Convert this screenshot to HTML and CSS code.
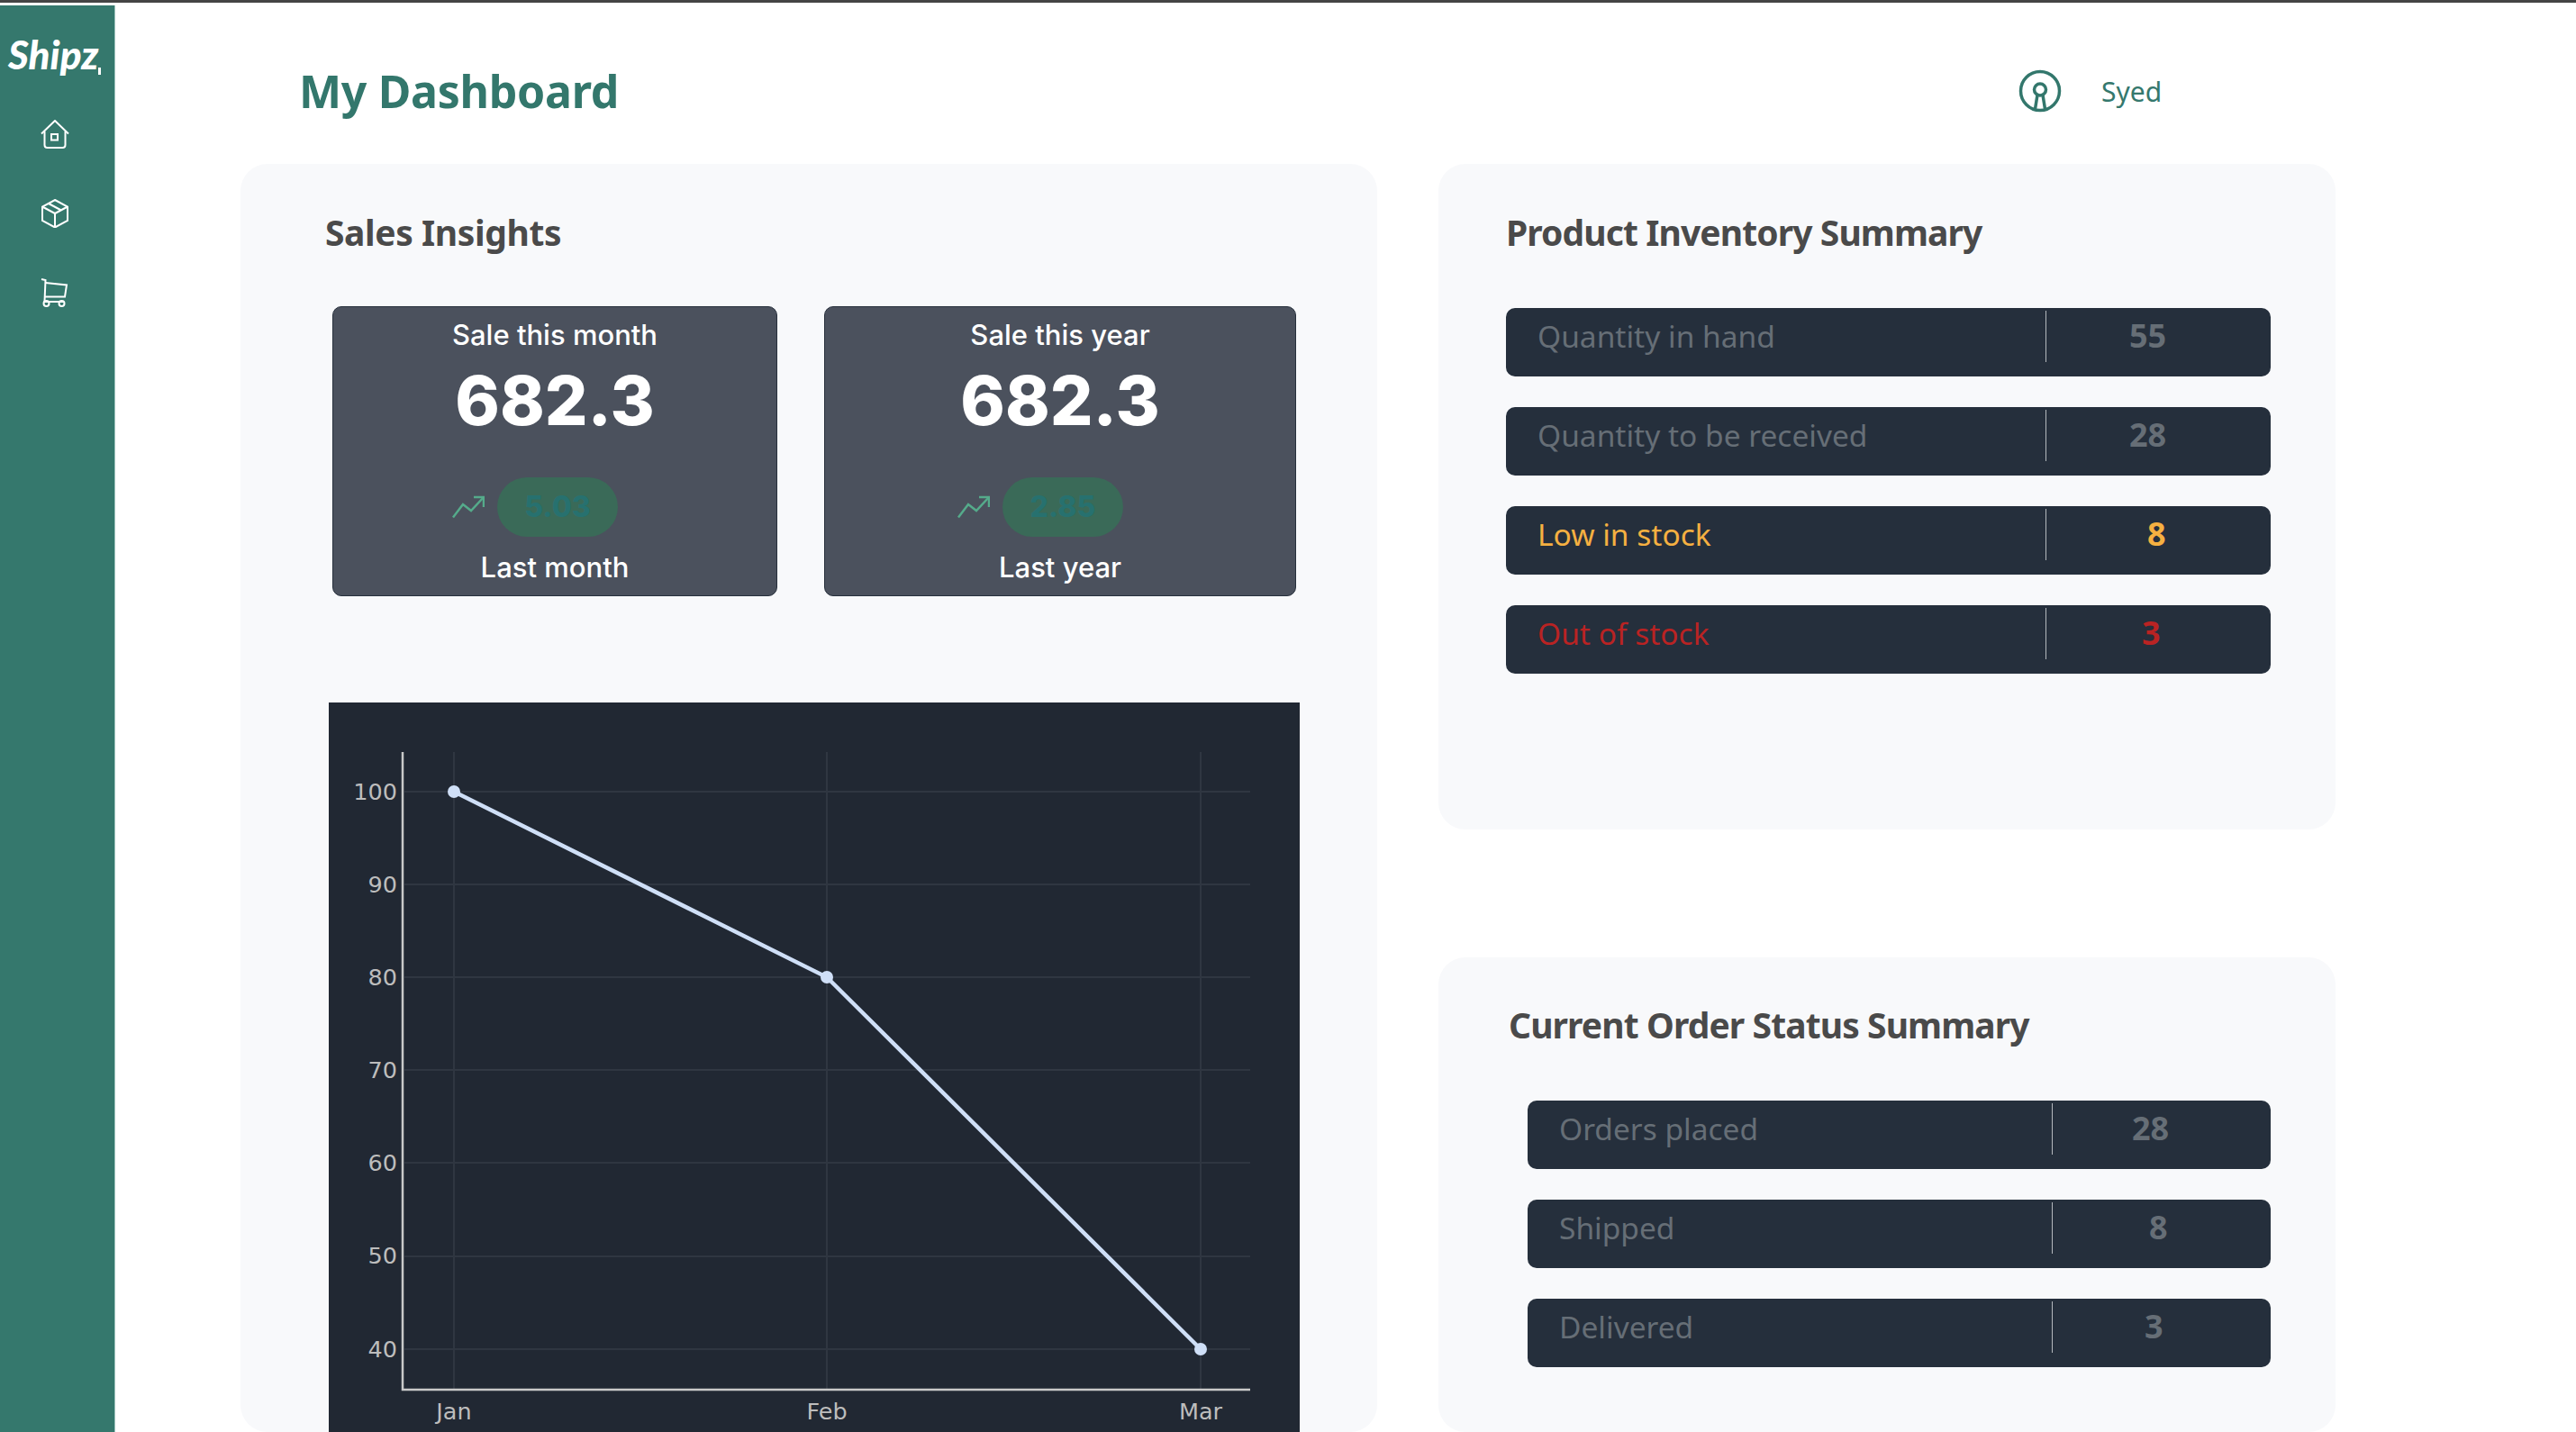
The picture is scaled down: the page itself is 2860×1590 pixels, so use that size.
FILE: index.html
```html
<!DOCTYPE html>
<html lang="en">

<head>
    <meta charset="UTF-8">
    <title>Shipzy Dashboard</title>
    <link rel="stylesheet" href="styles.css">
</head>

<body>
    <div class="topbar"></div>
    <div class="app">
        <aside class="sidebar">
            <div class="logo">Shipz</div>
            <nav class="nav">
                <svg class="nav-icon" viewBox="0 0 32 32">
                    <path d="M1 15.500L16 1L31 15.500" />
                    <path d="M4.500 13V28C4.500 30 5.500 31 7.500 31H24.500C26.500 31 27.500 30 27.500 28V13" />
                    <rect x="12" y="16" width="7" height="6.500" />
                </svg>
                <svg class="nav-icon" viewBox="0 0 32 32">
                    <path d="M16 1L30 8.500V24L16 31.500L2 24V8.500Z" />
                    <path d="M2 8.500L16 16L30 8.500M16 16V31.500M9 5L23 12.500" />
                </svg>
                <svg class="nav-icon" viewBox="0 0 32 32">
                    <path d="M1 1L5.500 2L4.500 26H25" />
                    <path d="M5.500 5L29 7.500L27 20.500H5" />
                    <circle cx="6.500" cy="28" r="3" />
                    <circle cx="23.500" cy="28" r="3" />
                </svg>
            </nav>
        </aside>

        <main class="main">
            <header class="header">
                <h1 class="page-title">My Dashboard</h1>
                <div class="user">
                    <svg class="user-icon" viewBox="0 0 48 48">
                        <circle cx="24" cy="24" r="21.500" />
                        <circle cx="24" cy="22.500" r="6.500" />
                        <path d="M21 28.500L18.500 44M27 28.500L29.500 44" />
                    </svg>
                    <span class="user-name">Syed</span>
                </div>
            </header>

            <div class="columns">
                <section class="card card-sales">
                    <h2 class="card-title">Sales Insights</h2>
                    <div class="stats">
                        <div class="stat stat-month">
                            <p class="stat-label">Sale this month</p>
                            <p class="stat-value">682.3</p>
                            <div class="trend">
                                <svg class="trend-icon" viewBox="0 0 36 26">
                                    <path d="M1 24.500L12 10L21 17L35 2" />
                                    <path d="M24 2H35V13" />
                                </svg>
                                <span class="pill">5.03</span>
                            </div>
                            <p class="stat-label">Last month</p>
                        </div>
                        <div class="stat stat-year">
                            <p class="stat-label">Sale this year</p>
                            <p class="stat-value">682.3</p>
                            <div class="trend">
                                <svg class="trend-icon" viewBox="0 0 36 26">
                                    <path d="M1 24.500L12 10L21 17L35 2" />
                                    <path d="M24 2H35V13" />
                                </svg>
                                <span class="pill">2.85</span>
                            </div>
                            <p class="stat-label">Last year</p>
                        </div>
                    </div>

                    <!-- chart coordinates start at the top left of the dark box -->
                    <svg class="chart" viewBox="0 0 1078 810">
                        <g class="grid">
                            <path d="M84 99H1023M84 202H1023M84 305H1023M84 408H1023M84 511H1023M84 615H1023M84 718H1023" />
                            <path d="M139 55V763M553 55V763M968 55V763" />
                        </g>
                        <path class="axis" d="M82 55V763H1023" />
                        <g class="tick tick-y">
                            <text x="76" y="108">100</text>
                            <text x="76" y="211">90</text>
                            <text x="76" y="314">80</text>
                            <text x="76" y="417">70</text>
                            <text x="76" y="520">60</text>
                            <text x="76" y="623">50</text>
                            <text x="76" y="727">40</text>
                        </g>
                        <g class="tick tick-x">
                            <text x="139" y="796">Jan</text>
                            <text x="553" y="796">Feb</text>
                            <text x="968" y="796">Mar</text>
                        </g>
                        <path class="line" d="M139 99L553 305L968 718" />
                        <circle class="dot" cx="139" cy="99" r="7" />
                        <circle class="dot" cx="553" cy="305" r="7" />
                        <circle class="dot" cx="968" cy="718" r="7" />
                    </svg>
                </section>

                <div class="side">
                    <section class="card card-inventory">
                        <h2 class="card-title">Product Inventory Summary</h2>
                        <div class="rows">
                            <div class="row">
                                <span class="row-label">Quantity in hand</span>
                                <span class="row-value">55</span>
                            </div>
                            <div class="row">
                                <span class="row-label">Quantity to be received</span>
                                <span class="row-value">28</span>
                            </div>
                            <div class="row row-low">
                                <span class="row-label">Low in stock</span>
                                <span class="row-value">8</span>
                            </div>
                            <div class="row row-out">
                                <span class="row-label">Out of stock</span>
                                <span class="row-value">3</span>
                            </div>
                        </div>
                    </section>

                    <section class="card card-orders">
                        <h2 class="card-title">Current Order Status Summary</h2>
                        <div class="rows">
                            <div class="row">
                                <span class="row-label">Orders placed</span>
                                <span class="row-value">28</span>
                            </div>
                            <div class="row row-shipped">
                                <span class="row-label">Shipped</span>
                                <span class="row-value">8</span>
                            </div>
                            <div class="row row-delivered">
                                <span class="row-label">Delivered</span>
                                <span class="row-value">3</span>
                            </div>
                        </div>
                    </section>
                </div>
            </div>
        </main>
    </div>
</body>

</html>
```
FILE: styles.css
```css
* {
    box-sizing: border-box;
}

body {
    margin: 0;
    height: 100vh;
    overflow: hidden;
    background-color: #ffffff;
    font-family: "Noto Sans", sans-serif;
}

h1,
h2,
p {
    margin: 0;
}

.topbar {
    height: 3px;
    margin-bottom: 3px;
    background-color: #454545;
}

.app {
    display: flex;
    height: 1584px;
}

/* Sidebar */
.sidebar {
    width: 128px;
    flex-shrink: 0;
    background-color: #35786d;
    border-right: 1px solid #9dc3bc;
}

.logo {
    display: flex;
    width: 112px;
    height: 56px;
    margin-top: 32px;
    padding-left: 9px;
    color: #ffffff;
    font-family: Lato, sans-serif;
    font-size: 44px;
    font-style: italic;
    font-weight: 900;
    line-height: 44px;
}

/* leftover bit of the cut off logo */
.logo::after {
    content: "";
    width: 4px;
    height: 8px;
    margin: 37px 0 0 auto;
    background-color: #ffffff;
}

.nav {
    display: flex;
    flex-direction: column;
    gap: 56px;
    margin-top: 39px;
    padding-left: 45px;
}

.nav-icon {
    width: 32px;
    height: 32px;
    fill: none;
    stroke: #ffffff;
    stroke-width: 2;
}

/* Header */
.main {
    flex: 1;
    padding-left: 139px;
    min-width: 0;
}

.header {
    display: flex;
    align-items: center;
    justify-content: space-between;
    width: 2159px;
    height: 176px;
    padding: 14px 0 0 65px;
}

.page-title {
    color: #33776c;
    font-size: 50px;
    font-weight: 700;
    letter-spacing: -0.300px;
    line-height: 64px;
}

.user {
    display: flex;
    align-items: center;
    gap: 44px;
    width: 185px;
}

.user-icon {
    width: 48px;
    height: 48px;
    flex-shrink: 0;
    fill: none;
    stroke: #33776c;
    stroke-width: 3.500;
}

.user-name {
    color: #35786d;
    font-size: 30px;
}

/* Cards */
.columns {
    display: flex;
    gap: 68px;
}

.side {
    display: flex;
    flex-direction: column;
    gap: 142px;
    width: 996px;
}

.card {
    background-color: #f8f9fb;
    border-radius: 30px;
}

.card-title {
    color: #4a4a4a;
    font-size: 39px;
    font-weight: 700;
    letter-spacing: -0.900px;
    line-height: 56px;
}

.card-sales {
    width: 1262px;
    height: 1408px;
    padding: 48px 0 0 94px;
}

.card-inventory {
    height: 739px;
    padding: 48px 72px 0 75px;
}

.card-orders {
    height: 527px;
    padding: 47px 72px 0 78px;
}

.card-sales .card-title {
    letter-spacing: -0.400px;
}

/* Sale boxes */
.stats {
    display: flex;
    gap: 52px;
    margin: 54px 0 0 8px;
}

.stat {
    display: flex;
    flex-direction: column;
    align-items: center;
    height: 322px;
    padding-top: 13px;
    background-color: #4b515d;
    border: 1px solid #27303c;
    border-radius: 10px;
    color: #ffffff;
    font-family: Inter, sans-serif;
}

.stat-month {
    width: 494px;
}

.stat-year {
    width: 524px;
}

.stat-label {
    font-size: 31px;
    font-weight: 500;
    line-height: 36px;
}

.stat-value {
    margin-top: 13px;
    font-size: 75px;
    font-weight: 800;
    line-height: 84px;
}

.trend {
    display: flex;
    align-items: center;
    gap: 14px;
    margin: 43px 44px 16px 0;
}

.trend-icon {
    width: 36px;
    height: 26px;
    fill: none;
    stroke: #55ab8b;
    stroke-width: 2.500;
}

.pill {
    width: 134px;
    height: 66px;
    background-color: #3a6a58;
    border-radius: 33px;
    color: #27716f;
    font-size: 32px;
    font-weight: 800;
    line-height: 66px;
    text-align: center;
}

/* Chart */
.chart {
    display: block;
    width: 1078px;
    height: 810px;
    margin: 118px 0 0 4px;
    background-color: #212833;
}

.grid path {
    fill: none;
    stroke: #2f3641;
    stroke-width: 2;
}

.axis {
    fill: none;
    stroke: #c9c9c9;
    stroke-width: 2.500;
}

.tick text {
    fill: #bdbdbd;
    font-family: "DejaVu Sans", sans-serif;
    font-size: 25.500px;
}

.tick-y text {
    text-anchor: end;
}

.tick-x text {
    text-anchor: middle;
}

.line {
    fill: none;
    stroke: #cfdff7;
    stroke-width: 4.500;
}

.dot {
    fill: #cfdff7;
}

/* Summary rows */
.rows {
    display: flex;
    flex-direction: column;
    gap: 34px;
    margin-top: 56px;
}

.card-orders .rows {
    margin: 56px 0 0 21px;
}

.row {
    display: flex;
    height: 76px;
    padding-top: 3px;
    background-color: #252f3c;
    border-radius: 10px;
    color: #666e76;
}

.row-label {
    flex: 1;
    padding: 4px 0 0 35px;
    font-size: 33.500px;
    line-height: 48px;
}

.row-value {
    width: 250px;
    height: 57px;
    padding: 4px 0 0 92px;
    border-left: 1px solid #b4b8bd;
    font-size: 36px;
    font-weight: 700;
    line-height: 48px;
}

.card-orders .row-value {
    width: 243px;
    padding-left: 88px;
}

.row-low {
    color: #f5b041;
}

.row-low .row-value {
    padding-left: 112px;
}

.row-out {
    color: #b92323;
}

.row-out .row-value {
    padding-left: 106px;
}

.card-orders .row-shipped .row-value {
    padding-left: 107px;
}

.card-orders .row-delivered .row-value {
    padding-left: 102px;
}
```
